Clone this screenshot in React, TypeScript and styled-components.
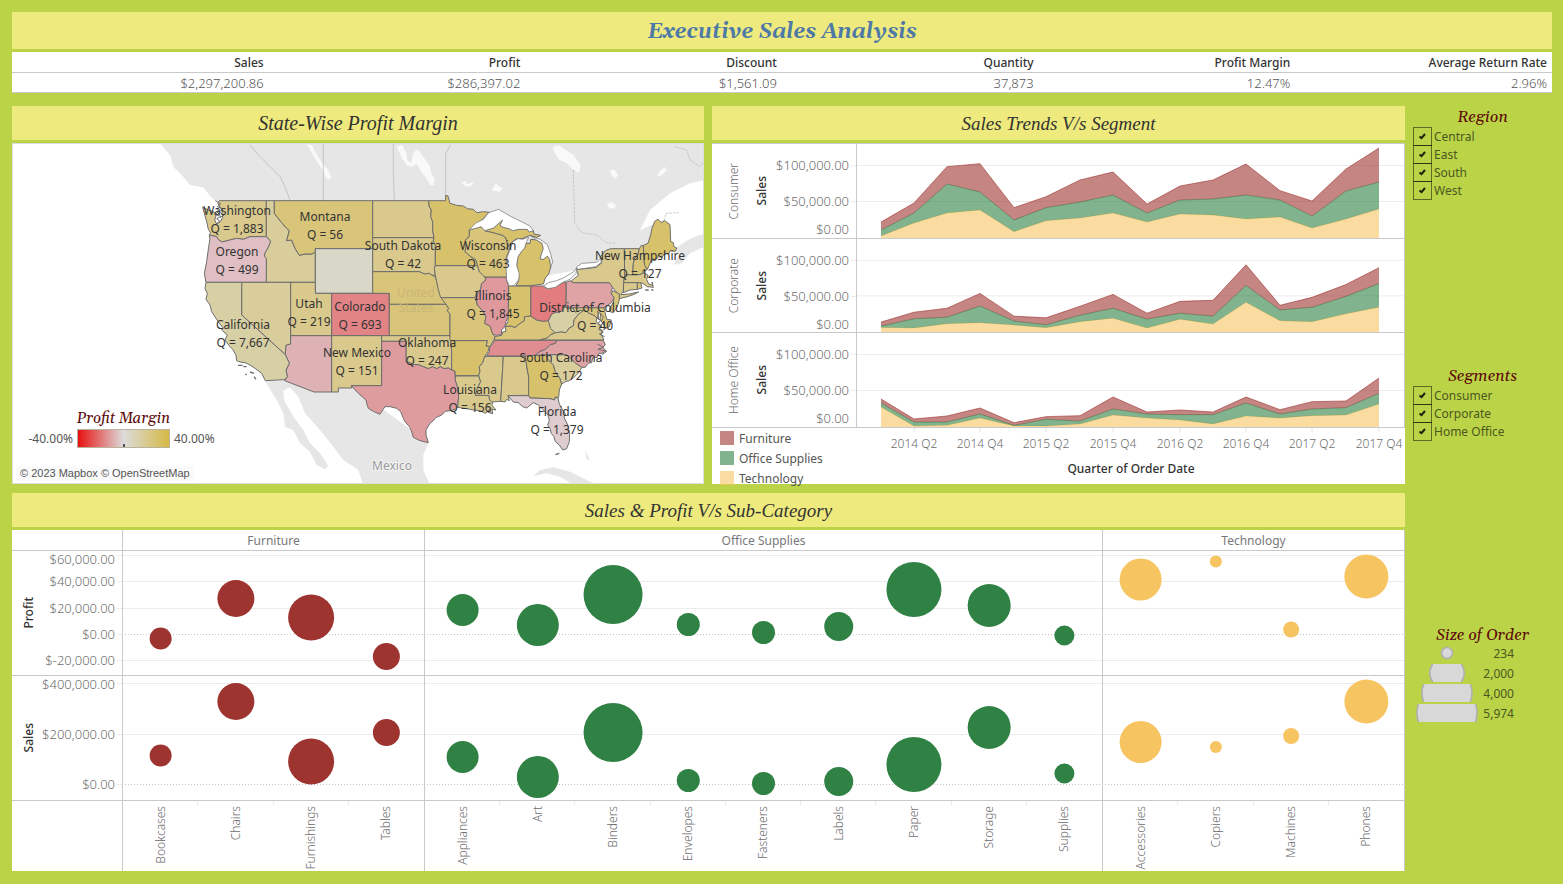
import React from "react";
import styled, { createGlobalStyle } from "styled-components";

const sans = `"Noto Sans", "Open Sans", sans-serif`;
const serif = `Georgia, Gelasio, "DejaVu Serif", serif`;
const lime = "#bbd447";
const butter = "#eeea7d";
const line = "#c9c9c9";
const maroon = "#5c0a0a";

const Global = createGlobalStyle`
  * { box-sizing: border-box; }
  body { margin: 0; background: ${lime}; font-family: ${sans}; font-size: 12px; color: #555; }
  svg { display: block; }
  h1, h2, h3 { margin: 0; font-weight: 400; }
  svg text { font-family: ${sans}; }
`;

/* ---------- page frame ---------- */
const Page = styled.main`
  display: flex;
  flex-direction: column;
  padding: 12px 11px 13px 12px;
`;
const Banner = styled.h1`
  height: 37px;
  margin-bottom: 3px;
  background: ${butter};
  color: #4e79a7;
  font: italic 700 21px/40px ${serif};
  text-align: center;
`;
const Columns = styled.div`
  display: grid;
  grid-template-columns: minmax(0, 1fr) 139px;
  column-gap: 8px;
  align-items: start;
  margin-top: 13px;
`;
const Main = styled.div`
  display: grid;
  grid-template-columns: minmax(0, 692fr) minmax(0, 693fr);
  gap: 9px 8px;
`;
const Panel = styled.section<{ $wide?: boolean }>`
  display: flex;
  flex-direction: column;
  grid-column: ${(p) => (p.$wide ? "1 / -1" : "auto")};
`;
const PanelTitle = styled.h2<{ $size?: number }>`
  height: 34px;
  margin-bottom: 3px;
  background: ${butter};
  color: #333;
  font: italic 400 ${(p) => p.$size ?? 19}px/35px "Liberation Serif", serif;
  text-align: center;
`;

/* ---------- totals ---------- */
const Totals = styled.table`
  width: 100%;
  table-layout: fixed;
  border-collapse: separate;
  border-spacing: 0;
  background: #fff;
`;
const TotalHead = styled.th`
  height: 21px;
  padding: 0 5px 0 0;
  border-bottom: 1px solid ${line};
  color: #333;
  font-size: 12px;
  font-weight: 500;
  text-align: right;
`;
const TotalCell = styled.td`
  height: 20px;
  padding: 0 5px 0 0;
  border-bottom: 1px solid ${line};
  font-size: 13px;
  line-height: 18px;
  font-weight: 300;
  text-align: right;
`;

/* ---------- map ---------- */
const MapBody = styled.div`
  position: relative;
  flex: 1;
  min-height: 341px;
  border: 1px solid #dedede;
  background: #fff;
`;
const MapSvg = styled.svg`
  width: 100%;
  height: 339px;
`;
const RampLegend = styled.div`
  position: absolute;
  left: 12px;
  top: 265px;
  display: grid;
  grid-template-columns: 48px 93px 48px;
  column-gap: 4px;
  align-items: center;
`;
const LegendTitle = styled.h3`
  color: ${maroon};
  font: italic 400 16px/22px ${serif};
  text-align: center;
  white-space: nowrap;
`;
const RampTitle = styled(LegendTitle)`
  grid-column: 2;
  font-size: 15px;
  line-height: 20px;
`;
const RampLabel = styled.span<{ $end?: boolean }>`
  grid-row: 2;
  text-align: ${(p) => (p.$end ? "right" : "left")};
`;
const Ramp = styled.div`
  grid-row: 2;
  display: flex;
  justify-content: center;
  align-items: flex-end;
  height: 19px;
  border: 1px solid #b9b39b;
  background: linear-gradient(90deg, #e81010, #dcdcdc 50%, #d6b945);
`;
const RampMark = styled.i`
  width: 2px;
  height: 3px;
  background: #555;
`;
const Credit = styled.div`
  position: absolute;
  left: 3px;
  bottom: 2px;
  padding: 0 4px;
  background: #fafafa;
  font: 11px/15px "Liberation Sans", sans-serif;
`;

/* ---------- trends ---------- */
const TrendBody = styled.div`
  height: 341px;
  background: #fff;
`;
const TrendRow = styled.div<{ $h: number }>`
  display: grid;
  grid-template-columns: 144px minmax(0, 1fr);
  grid-template-rows: minmax(0, 1fr);
  height: ${(p) => p.$h}px;
  border-bottom: 1px solid ${line};
  border-right: 1px solid ${line};
  &:first-child { border-top: 1px solid ${line}; }
`;
const TrendAxis = styled.div`
  display: grid;
  grid-template-columns: 44px 12px minmax(0, 1fr);
  grid-template-rows: minmax(0, 1fr);
  align-items: center;
  justify-items: center;
`;
const Vertical = styled.span<{ $strong?: boolean }>`
  writing-mode: vertical-rl;
  transform: rotate(180deg);
  white-space: nowrap;
  line-height: 16px;
  font-weight: ${(p) => (p.$strong ? 500 : 300)};
  color: ${(p) => (p.$strong ? "#333" : "#6c6c6c")};
`;
const FillSvg = styled.svg`
  width: 100%;
  height: 100%;
`;
const TickSvg = styled(FillSvg)`
  overflow: visible;
`;
const Plot = styled.div`
  border-left: 1px solid ${line};
  min-width: 0;
`;
const TrendFoot = styled.div`
  display: grid;
  grid-template-columns: 145px minmax(0, 1fr);
`;
const Swatches = styled.ul`
  margin: 0;
  padding: 0 0 0 8px;
  list-style: none;
`;
const SwatchItem = styled.li<{ $c: string }>`
  display: flex;
  align-items: center;
  gap: 5px;
  height: 20px;
  white-space: nowrap;
  &::before {
    content: "";
    width: 14px;
    height: 14px;
    background: ${(p) => p.$c};
    opacity: 0.6;
  }
`;
const QuarterSvg = styled.svg`
  width: 100%;
  height: 31px;
  overflow: visible;
`;
const AxisTitle = styled.div`
  line-height: 20px;
  color: #333;
  font-weight: 500;
  text-align: center;
`;

/* ---------- bubbles ---------- */
const BubbleGrid = styled.div`
  display: grid;
  grid-template-columns: 110px minmax(0, 302fr) minmax(0, 678fr) minmax(0, 303fr);
  grid-template-rows: 21px 125px 125px 70px;
  background: #fff;
`;
const Cell = styled.div<{ $last?: boolean }>`
  min-width: 0;
  border-left: 1px solid ${line};
  border-bottom: ${(p) => (p.$last ? 0 : 1)}px solid ${line};
  &:nth-child(4n) { border-right: 1px solid ${line}; }
`;
const Corner = styled.div<{ $last?: boolean }>`
  border-bottom: ${(p) => (p.$last ? 0 : 1)}px solid ${line};
`;
const HeadCell = styled(Cell)`
  line-height: 21px;
  text-align: center;
  color: #787878;
`;
const AxisCell = styled.div`
  display: grid;
  grid-template-columns: 34px minmax(0, 1fr);
  grid-template-rows: minmax(0, 1fr);
  align-items: center;
  justify-items: center;
  border-bottom: 1px solid ${line};
`;
const Names = styled(Cell)`
  display: flex;
`;
const NameSlot = styled.div`
  flex: 1;
  display: flex;
  justify-content: center;
  align-items: flex-start;
  min-width: 0;
  padding-top: 5px;
  background: linear-gradient(#ececec, #ececec) right top / 1px 4px no-repeat;
  &:last-child { background: none; }
`;

/* ---------- side bar ---------- */
const Side = styled.aside`
  display: flex;
  flex-direction: column;
`;
const SideSection = styled.section`
  height: 259px;
  &:last-child { height: auto; }
`;
const Options = styled.div`
  display: flex;
  flex-direction: column;
`;
const Option = styled.label`
  position: relative;
  display: flex;
  align-items: center;
  gap: 2px;
  height: 18px;
  color: #4c5720;
`;
const Tick = styled.input`
  appearance: none;
  flex: none;
  width: 19px;
  height: 19px;
  margin: 0;
  border: 1px solid rgba(0, 0, 0, 0.5);
`;
const TickMark = styled.svg`
  position: absolute;
  left: 5px;
  top: 5px;
`;
const SideTitle = styled(LegendTitle)<{ $tight?: boolean }>`
  height: ${(p) => (p.$tight ? 19 : 21)}px;
`;
const Sizes = styled.ul`
  margin: 0;
  padding: 0;
  list-style: none;
`;
const SizeItem = styled.li`
  display: grid;
  grid-template-columns: 68px 33px;
  align-items: center;
  height: 20px;
  text-align: right;
  color: #4c5720;
`;

/* ---------- data ---------- */
const RED = "#9e3430";
const GREEN = "#2f8144";
const GOLD = "#f7c462";

const totals = [
  ["Sales", "$2,297,200.86"],
  ["Profit", "$286,397.02"],
  ["Discount", "$1,561.09"],
  ["Quantity", "37,873"],
  ["Profit Margin", "12.47%"],
  ["Average Return Rate", "2.96%"],
];

const quarterX = [24, 57, 90, 123, 157, 189, 223, 256, 290, 323, 356, 389, 423, 455, 489, 522];
const quarterLabels = ["2014 Q2", "2014 Q4", "2015 Q2", "2015 Q4", "2016 Q2", "2016 Q4", "2017 Q2", "2017 Q4"];

// Stacked upper edges of each band; 108 units stand for $50,000.
const trends = [
  {
    name: "Consumer",
    h: 96,
    tech: [6, 45, 75, 84, 19, 52, 60, 75, 48, 72, 69, 57, 63, 30, 57, 87],
    office: [24, 75, 162, 138, 54, 91, 108, 129, 75, 114, 117, 129, 114, 66, 141, 168],
    furn: [48, 105, 214, 223, 91, 124, 174, 198, 102, 156, 174, 222, 142, 111, 207, 270],
  },
  {
    name: "Corporate",
    h: 94,
    tech: [14, 12, 25, 28, 21, 13, 31, 42, 12, 39, 24, 90, 34, 31, 55, 75],
    office: [18, 40, 45, 79, 33, 22, 51, 72, 39, 57, 48, 141, 67, 75, 108, 147],
    furn: [30, 60, 72, 117, 48, 43, 78, 114, 57, 93, 96, 204, 81, 105, 144, 195],
  },
  {
    name: "Home Office",
    h: 95,
    tech: [60, 3, 5, 27, 3, 3, 9, 36, 27, 21, 9, 33, 27, 34, 36, 69],
    office: [72, 15, 15, 39, 5, 23, 18, 54, 39, 37, 37, 72, 39, 54, 58, 101],
    furn: [84, 24, 33, 57, 13, 31, 34, 90, 45, 51, 45, 90, 52, 76, 78, 147],
  },
];

type Bubble = [name: string, profitY: number, salesY: number, r: number];
const groups: { name: string; color: string; items: Bubble[] }[] = [
  {
    name: "Furniture",
    color: RED,
    items: [
      ["Bookcases", 87, 79, 11],
      ["Chairs", 47, 25, 18.5],
      ["Furnishings", 66, 85, 23],
      ["Tables", 105, 56, 13.5],
    ],
  },
  {
    name: "Office Supplies",
    color: GREEN,
    items: [
      ["Appliances", 58.5, 80.5, 16],
      ["Art", 73.5, 100.5, 21],
      ["Binders", 43, 56, 29.5],
      ["Envelopes", 73, 104, 11.5],
      ["Fasteners", 81, 107, 11.5],
      ["Labels", 75, 105, 14.5],
      ["Paper", 38, 88, 27.5],
      ["Storage", 54, 51, 21.5],
      ["Supplies", 84, 97, 10],
    ],
  },
  {
    name: "Technology",
    color: GOLD,
    items: [
      ["Accessories", 28, 65.5, 21],
      ["Copiers", 10, 70.5, 6],
      ["Machines", 78, 59.5, 8],
      ["Phones", 25, 25, 22],
    ],
  },
];

const measures = [
  {
    name: "Profit",
    grid: [4, 30, 57, 109],
    zero: 83,
    ticks: [["$60,000.00", 8], ["$40,000.00", 30], ["$20,000.00", 57], ["$0.00", 83], ["$-20,000.00", 109]] as [string, number][],
  },
  {
    name: "Sales",
    grid: [7, 58],
    zero: 108,
    ticks: [["$400,000.00", 8], ["$200,000.00", 58], ["$0.00", 108]] as [string, number][],
  },
];

const Y1 = "#dac98c";
const Y2 = "#d9c57a";
const Y3 = "#d8c16b";
const Y4 = "#d8d0a5";

// State outlines share one coordinate system, three units to a pixel.
const states: [fill: string, points: string][] = [
  [Y1, "88,62 229,62 229,170 180,170 160,178 140,175 120,180 97,186 86,180 80,170 58,165 62,158 55,148 50,125 38,82 60,92 72,96 78,108 74,120 80,132 92,124 98,112 95,90 88,78 84,70"],
  ["#dfbfc3", "58,165 80,170 86,180 97,186 120,180 140,175 160,178 180,170 229,170 234,174 242,184 236,200 226,218 223,228 230,235 229,307 48,307 43,280 50,245 56,200 60,178"],
  ["#d9cd9b", "229,62 253,62 253,100 275,128 290,145 298,152 290,182 305,180 315,205 328,226 345,222 366,222 376,216 376,307 229,307 229,235 223,228 226,218 236,200 242,184 234,174 229,170"],
  [Y2, "253,62 548,62 548,206 376,206 376,216 366,222 345,222 328,226 315,205 305,180 290,182 298,152 290,145 275,128 253,100"],
  ["#d9d7c8", "376,206 548,206 548,340 376,340"],
  ["#d9cd9b", "155,307 302,307 302,492 288,496 286,524 155,405"],
  [Y1, "302,307 376,307 376,340 425,340 425,467 302,467"],
  ["#e28386", "425,340 598,340 598,467 425,467"],
  ["#deb2b5", "302,467 425,467 425,636 372,636 284,602 292,590 288,570 298,550 286,524 288,496 302,492"],
  [Y1, "425,467 575,467 575,617 484,617 486,624 445,624 445,636 425,636"],
  [Y4, "48,307 155,307 155,405 286,524 298,550 288,570 292,590 284,599 226,602 215,580 195,565 180,555 165,548 150,546 140,542 138,525 128,508 120,500 105,480 112,465 95,450 100,444 88,430 78,415 65,395 60,375 48,358 52,340 45,325"],
  [Y1, "548,62 716,62 718,80 724,90 722,110 728,125 728,150 732,173 548,173"],
  [Y1, "548,173 732,173 730,182 736,195 736,257 733,265 736,287 725,285 718,280 704,282 688,275 548,275"],
  [Y2, "548,275 688,275 704,282 718,280 725,285 736,290 742,310 748,330 752,345 760,360 768,373 598,373 598,340 548,340"],
  [Y2, "598,373 768,373 776,385 772,392 780,402 780,467 598,467"],
  [Y1, "575,467 781,467 785,515 785,570 775,564 762,566 752,560 740,566 728,560 715,566 700,560 685,554 668,554 660,548 648,545 648,484 575,484"],
  ["#df9c9f", "575,484 648,484 648,545 660,548 668,554 685,554 700,560 715,566 728,560 740,566 752,560 762,566 775,564 785,570 795,573 796,600 803,622 806,650 803,682 795,688 780,692 766,694 756,704 745,710 738,712 728,724 720,730 714,740 708,750 708,765 715,788 690,782 670,772 664,752 658,740 645,725 640,715 632,695 620,685 600,680 585,680 578,690 570,703 550,694 535,685 530,670 528,660 505,640 484,617 575,617"],
  [Y3, "716,62 767,62 767,46 774,48 780,70 800,76 820,78 832,86 850,88 860,98 880,95 898,97 870,125 838,150 838,170 826,180 828,200 825,215 840,228 858,240 865,257 736,257 736,195 730,182 732,173 728,150 728,125 722,110 724,90 718,80"],
  [Y1, "736,257 863,257 868,275 885,290 888,300 875,310 872,328 862,335 855,353 752,353 745,330 740,305 736,287 733,265"],
  [Y2, "753,353 855,353 862,375 880,395 888,410 884,430 900,438 908,462 916,470 910,482 900,500 888,498 892,482 780,482 780,402 772,392 776,385 768,373"],
  [Y3, "782,482 892,482 888,498 898,500 894,515 884,530 878,548 868,560 870,574 866,587 796,587 795,573 785,570 785,515"],
  [Y1, "796,588 866,588 872,605 862,625 856,646 897,646 899,660 908,664 906,676 918,690 906,688 908,702 896,692 886,700 870,692 850,690 830,686 803,682 806,650 803,622 796,600"],
  [Y1, "892,529 940,529 936,600 932,664 905,666 899,660 897,646 856,646 862,625 872,605 866,587 870,574 868,560 878,548 884,530"],
  [Y1, "940,529 1006,529 1012,570 1016,590 1016,610 1018,646 954,647 958,662 950,658 945,666 932,664 936,600"],
  [Y3, "1006,528 1070,524 1075,540 1090,555 1096,575 1110,595 1115,612 1108,630 1106,652 1095,652 1094,660 1080,656 1020,654 1016,646 1016,590 1012,570"],
  ["#deccce", "954,647 1016,647 1020,654 1080,656 1094,660 1095,652 1104,654 1108,672 1118,690 1126,702 1122,712 1134,736 1139,760 1138,785 1130,806 1118,810 1108,795 1096,785 1092,770 1084,760 1080,745 1073,735 1078,722 1074,705 1060,690 1045,675 1030,668 1020,676 1010,684 998,680 985,668 970,666"],
  ["#d9cd9b", "1070,524 1130,524 1160,552 1176,562 1164,580 1150,594 1138,602 1128,604 1115,612 1110,595 1096,575 1090,555 1075,540"],
  ["#dfa3a6", "1100,481 1240,481 1246,495 1238,502 1248,512 1236,520 1226,520 1222,532 1208,534 1205,548 1194,550 1186,562 1176,562 1160,552 1130,524 1070,524 1035,526 1050,514 1066,508 1080,494 1096,490"],
  ["#e08d91", "914,481 1100,481 1096,490 1080,494 1066,508 1050,514 1035,526 1006,528 890,528 898,515 900,500 908,492"],
  [Y2, "914,480 914,470 935,466 938,456 948,454 945,440 962,438 975,442 990,430 1003,422 1003,410 1022,408 1040,420 1060,424 1077,420 1082,440 1092,450 1098,457 1082,464 1072,474 1050,480"],
  [Y4, "1075,422 1085,402 1100,396 1108,398 1122,385 1128,366 1128,384 1148,384 1156,396 1168,392 1184,390 1178,402 1166,402 1152,420 1150,438 1138,444 1128,458 1112,456 1098,460 1082,446"],
  [Y1, "1050,480 1072,474 1082,464 1098,458 1112,456 1128,458 1138,444 1150,438 1152,420 1166,402 1184,390 1198,400 1212,406 1222,412 1218,424 1232,436 1228,446 1238,452 1234,464 1242,480"],
  [Y2, "1148,383 1242,383 1250,418 1264,420 1258,440 1246,446 1240,430 1230,420 1232,400 1224,398 1226,418 1212,406 1198,400 1184,390 1168,392 1156,396"],
  ["#dfa3a6", "1128,308 1140,302 1150,308 1258,308 1268,322 1262,338 1272,352 1264,368 1252,376 1242,383 1128,383"],
  ["#e27c7f", "1022,318 1058,318 1072,326 1090,322 1110,312 1128,305 1128,366 1122,385 1108,398 1100,396 1085,402 1075,422 1060,424 1040,420 1022,408"],
  [Y3, "956,318 1022,318 1022,408 1003,410 1003,422 990,430 975,442 962,438 945,440 954,425"],
  ["#df999d", "884,291 948,291 955,318 955,408 948,425 944,440 935,450 934,464 918,466 908,462 900,438 884,430 888,410 880,395 862,375 858,355 864,338 872,328 875,310 888,300"],
  [Y2, "838,150 860,144 874,140 884,152 910,158 938,166 948,174 950,186 956,196 950,206 962,192 956,215 948,235 950,262 950,291 884,291 868,275 863,257 858,240 840,228 825,215 828,200 826,180 838,170"],
  [Y3, "884,152 910,144 924,132 938,120 930,136 940,142 958,146 968,152 985,148 1012,148 1018,156 1030,152 1032,162 1052,166 1040,172 1020,166 996,176 980,176 966,186 958,196 950,186 948,174 938,166 910,158"],
  [Y3, "1022,178 1040,180 1056,190 1060,205 1054,224 1050,236 1060,238 1072,228 1080,240 1082,262 1076,282 1066,294 1060,312 1022,317 978,317 986,302 986,280 980,256 984,230 996,212 1004,204 1008,190 1020,190"],
  [Y1, "1145,302 1165,286 1160,268 1190,266 1218,262 1236,248 1230,232 1246,212 1262,206 1303,206 1304,285 1301,310 1300,334 1292,344 1318,342 1346,336 1330,344 1312,350 1288,356 1282,340 1268,322 1258,308 1150,308"],
  [Y1, "1303,206 1348,206 1344,224 1334,235 1330,250 1328,285 1304,285"],
  [Y2, "1348,206 1354,196 1360,198 1362,240 1364,256 1372,268 1362,276 1350,284 1328,285 1330,250 1334,235 1344,224"],
  [Y1, "1304,285 1350,284 1362,278 1374,286 1370,298 1376,312 1388,316 1386,306 1390,322 1372,320 1362,312 1352,308 1301,308"],
  [Y1, "1301,308 1342,308 1342,328 1320,330 1300,338"],
  [Y2, "1342,308 1352,308 1356,324 1342,328"],
  [Y3, "1360,196 1374,190 1382,165 1386,145 1394,124 1404,118 1414,128 1424,122 1440,134 1442,184 1450,188 1452,200 1460,204 1456,214 1440,212 1436,222 1424,220 1416,232 1404,230 1396,242 1384,240 1378,256 1372,268 1364,256 1362,240"],
  [Y2, "1268,332 1288,342 1288,360 1282,380 1270,398 1258,394 1260,382 1270,368 1272,352 1264,342"],
];

const lakes = [
  "838,150 856,130 880,118 896,98 926,88 960,108 1020,138 1030,152 1018,156 1012,148 985,148 968,152 958,146 940,142 930,136 938,120 924,132 910,144 884,152 874,140 860,144",
  "1016,172 998,178 984,176 968,186 958,215 952,230 948,260 950,300 958,318 972,316 986,300 988,282 980,256 984,230 996,212 1004,204 1008,190",
  "1022,168 1050,178 1072,194 1082,222 1088,246 1082,262 1080,240 1072,228 1060,238 1050,236 1054,224 1060,205 1056,190 1040,180",
  "1060,318 1076,308 1100,302 1120,294 1150,276 1160,264 1158,280 1140,298 1120,306 1096,322 1074,326",
  "1160,260 1176,250 1206,248 1222,246 1232,236 1234,246 1218,260 1190,264 1162,268",
];

const waterMarks = [
  "350,-108 366,-104 380,-76 396,-52 412,-34 424,-10 418,0 408,-6 398,-30 380,-56 366,-80",
  "620,-100 636,-106 648,-84 652,-60 662,-50 672,-84 684,-92 700,-70 718,-44 724,-20 734,-4 732,16 720,14 706,-10 694,-24 680,-48 664,-40 650,-44 636,-66",
  "1088,-100 1108,-104 1124,-92 1150,-76 1172,-44 1166,-22 1144,-36 1128,-52 1108,-60 1094,-80",
  "815,8 824,2 832,12 850,6 846,18 828,20",
  "905,30 918,10 928,20 938,24 930,36 918,34",
  "1260,-30 1274,-30 1284,-14 1276,-4 1266,-12",
  "1400,-10 1410,-28 1424,-40 1430,-30 1416,-14",
  "1250,74 1264,66 1278,76 1272,86 1258,84",
];

const places: [string, string, number, number][] = [
  ["Washington", "1,883", 237, 211],
  ["Montana", "56", 325, 217],
  ["Oregon", "499", 237, 252],
  ["South Dakota", "42", 403, 246],
  ["Wisconsin", "463", 488, 246],
  ["New Hampshire", "127", 640, 256],
  ["Utah", "219", 309, 304],
  ["Colorado", "693", 360, 307],
  ["California", "7,667", 243, 325],
  ["Illinois", "1,845", 493, 296],
  ["District of Columbia", "40", 595, 308],
  ["New Mexico", "151", 357, 353],
  ["Oklahoma", "247", 427, 343],
  ["South Carolina", "172", 561, 358],
  ["Louisiana", "156", 470, 390],
  ["Florida", "1,379", 557, 412],
];

/* ---------- drawings ---------- */
function ProfitMap() {
  return (
    <MapSvg viewBox="0 0 690 339" preserveAspectRatio="xMidYMid slice" role="img" aria-label="Profit margin by state">
      <g transform="translate(177 36) scale(.33333)">
        <g fill="#e6e6e6">
          <path d="M-90,-110 L-60,-75 -50,-40 -20,-10 0,15 30,20 50,40 66,60 90,66 760,66 1000,300 1160,270 1350,260 1440,200 1420,120 1350,150 1380,90 1440,40 1500,10 1545,0 V-120 H-90 Z" />
          <path d="M1440,214 L1470,196 1500,176 1545,160 V200 L1500,220 1476,250 1450,254 1470,220 Z" />
          <path d="M225,603 L284,601 372,636 484,617 715,788 700,825 700,870 720,915 H520 L505,870 460,840 430,800 390,750 345,700 325,650 300,622 280,632 282,660 310,710 340,750 360,790 390,820 415,858 405,868 380,855 360,815 330,790 310,750 285,740 280,700 260,660 Z" />
          <path d="M1030,888 L1050,870 1090,862 1140,875 1200,905 1240,920 H1160 L1110,890 1070,880 Z M1185,810 L1195,830 1200,840 1190,838 Z" />
        </g>
        <g fill="#fff">
          {waterMarks.map((p) => (
            <polygon key={p} points={p} opacity=".75" />
          ))}
          <path d="M1370,130 L1384,96 1410,66 1450,40 1500,14 1545,8 V40 L1500,50 1470,66 1440,84 1424,100 1404,110 Z M1440,134 L1470,112 1500,100 1545,106 V150 L1500,166 1470,190 1452,196 1442,184 Z" opacity=".9" />
          <path d="M20,20 L40,22 62,50 80,66 64,72 40,56 Z" />
        </g>
        <g fill="none" stroke="#b3b3b3" strokeWidth="2">
          <path d="M400,-110 V62 M610,-110 V-20 L613,62 M767,62 V-80 L782,-105 M180,-105 L210,-70 240,-40 270,-10 285,20 300,60" />
          <path d="M1150,-30 L1154,130 1175,158 1220,165 1250,188 1278,190 M1422,122 L1428,100 1466,98" strokeDasharray="8 3" />
          <path d="M1455,-100 L1490,-90 1500,-60 1530,-40 1545,-60" strokeDasharray="8 3" />
        </g>
        <g stroke="#6c6c6c" strokeWidth="3" strokeLinejoin="round">
          {states.map(([fill, pts]) => (
            <polygon key={pts} points={pts} fill={fill} />
          ))}
          {lakes.map((p) => (
            <polygon key={p} points={p} fill="#fff" strokeWidth="2" />
          ))}
          <path d="M76,62 L92,72 82,80 98,86 88,96 102,106 90,112 M84,98 L92,110 80,116 90,124 80,130 M78,84 L86,94 76,104 88,108 M1222,392 L1226,404 1220,414 1232,420 1224,432 1236,440 1226,448 1240,456 1228,462 1244,470 M1232,400 L1240,412 1234,424 1244,436 M1222,492 L1240,502 1224,508 1250,514 1236,524 M890,676 L900,686 892,696 904,700" fill="none" />
          <path d="M144,556 h14 M160,560 h10 M180,576 l12,4 M166,582 l4,3 M192,590 l6,8 M1096,824 l12,-4 M1366,330 h10 M1384,330 h6" fill="none" strokeWidth="4" />
        </g>
      </g>
      <g fontSize="12" textAnchor="middle" fill="#c9b577">
        <text x="403" y="153">United</text>
        <text x="403" y="168">States</text>
        <text x="379" y="326" fill="#999" stroke="#f4f4f4" strokeWidth="2" paintOrder="stroke">Mexico</text>
      </g>
      <g fontSize="12" textAnchor="middle" fill="#333">
        {places.map(([name, q, x, y]) => (
          <React.Fragment key={name}>
            <text x={x - 13} y={y - 140}>{name}</text>
            <text x={x - 13} y={y - 122}>{`Q = ${q}`}</text>
          </React.Fragment>
        ))}
      </g>
    </MapSvg>
  );
}

function Band({ top, base, color }: { top: number[]; base: number[]; color: string }) {
  const upper = quarterX.map((x, i) => `${x},${282 - top[i]}`);
  const lower = quarterX.map((x, i) => `${x},${282 - base[i]}`).reverse();
  return (
    <>
      <polygon points={[...upper, ...lower].join(" ")} fill={color} opacity=".6" />
      <polyline points={upper.join(" ")} fill="none" stroke={color} opacity=".6" vectorEffect="non-scaling-stroke" />
    </>
  );
}

function Ticks({ ticks, marks }: { ticks: [string, number][]; marks: number[] }) {
  return (
    <TickSvg>
      <g fill="#6c6c6c" fontSize="13" fontWeight="300" textAnchor="end">
        <svg x="100%" overflow="visible">
          {ticks.map(([t, y]) => (
            <text key={t} x="-7" y={y + 5}>{t}</text>
          ))}
          {marks.map((y) => (
            <path key={y} d={`M-5,${y + 0.5} H0`} stroke="#ececec" />
          ))}
        </svg>
      </g>
    </TickSvg>
  );
}

function Trends() {
  const zero = quarterX.map(() => 0);
  return (
    <TrendBody>
      {trends.map((t) => (
        <TrendRow key={t.name} $h={t.h}>
          <TrendAxis>
            <Vertical>{t.name}</Vertical>
            <Vertical $strong>Sales</Vertical>
            <Ticks ticks={[["$100,000.00", 21], ["$50,000.00", 57], ["$0.00", 85]]} marks={[21, 57]} />
          </TrendAxis>
          <Plot>
            <FillSvg viewBox="0 0 547 282" preserveAspectRatio="none" role="img" aria-label={`${t.name} sales by quarter`}>
              <path d="M0,64.5 H547 M0,172.5 H547" stroke="#ececec" vectorEffect="non-scaling-stroke" />
              <Band top={t.tech} base={zero} color={GOLD} />
              <Band top={t.office} base={t.tech} color={GREEN} />
              <Band top={t.furn} base={t.office} color={RED} />
            </FillSvg>
          </Plot>
        </TrendRow>
      ))}
      <TrendFoot>
        <Swatches>
          <SwatchItem $c={RED}>Furniture</SwatchItem>
          <SwatchItem $c={GREEN}>Office Supplies</SwatchItem>
          <SwatchItem $c={GOLD}>Technology</SwatchItem>
        </Swatches>
        <div>
          <QuarterSvg fill="#6c6c6c" fontSize="12" fontWeight="300" textAnchor="middle">
            {quarterLabels.map((q, i) => {
              const x = `${(quarterX[i * 2 + 1] / 548) * 100}%`;
              return (
                <React.Fragment key={q}>
                  <line x1={x} x2={x} y1="0" y2="4" stroke="#e4e4e4" />
                  <text x={x} y="20">{q}</text>
                </React.Fragment>
              );
            })}
          </QuarterSvg>
          <AxisTitle>Quarter of Order Date</AxisTitle>
        </div>
      </TrendFoot>
    </TrendBody>
  );
}

function Bubbles() {
  return (
    <BubbleGrid>
      <Corner />
      {groups.map((g) => (
        <HeadCell key={g.name}>{g.name}</HeadCell>
      ))}
      {measures.map((m, mi) => (
        <React.Fragment key={m.name}>
          <AxisCell>
            <Vertical $strong>{m.name}</Vertical>
            <Ticks ticks={m.ticks} marks={[...m.grid, m.zero]} />
          </AxisCell>
          {groups.map((g) => (
            <Cell key={g.name}>
              <FillSvg role="img" aria-label={`${g.name} ${m.name}`}>
                {m.grid.map((y) => (
                  <line key={y} x1="0" x2="100%" y1={y + 0.5} y2={y + 0.5} stroke="#ececec" />
                ))}
                <line x1="2" x2="100%" y1={m.zero + 0.5} y2={m.zero + 0.5} stroke="#c4c4c4" strokeDasharray="1 2" />
                {g.items.map((b, i) => (
                  <circle key={b[0]} cx={`${((i + 0.5) / g.items.length) * 100}%`} cy={b[mi === 0 ? 1 : 2] + 0.5} r={b[3]} fill={g.color} />
                ))}
              </FillSvg>
            </Cell>
          ))}
        </React.Fragment>
      ))}
      <Corner $last />
      {groups.map((g) => (
        <Names key={g.name} $last>
          {g.items.map((b) => (
            <NameSlot key={b[0]}>
              <Vertical>{b[0]}</Vertical>
            </NameSlot>
          ))}
        </Names>
      ))}
    </BubbleGrid>
  );
}

function Filter({ title, options }: { title: string; options: string[] }) {
  return (
    <SideSection>
      <SideTitle>{title}</SideTitle>
      <Options>
        {options.map((o) => (
          <Option key={o}>
            <Tick type="checkbox" defaultChecked />
            <TickMark width="9" height="8" viewBox="0 0 9 8" aria-hidden="true">
              <path d="M1.5,4.5 L3.5,6.2 L7,2" fill="none" stroke="#1d210c" strokeWidth="2" />
            </TickMark>
            {o}
          </Option>
        ))}
      </Options>
    </SideSection>
  );
}

function SizeShape({ r }: { r: number }) {
  const h = Math.min(r, 9);
  const dx = Math.sqrt(r * r - h * h);
  const d = r <= 9
    ? `M${34 - r},10 a${r},${r} 0 1 0 ${2 * r},0 a${r},${r} 0 1 0 ${-2 * r},0`
    : `M${34 - dx},1 A${r},${r} 0 0 0 ${34 - dx},19 M${34 + dx},1 A${r},${r} 0 0 1 ${34 + dx},19`;
  const body = `M${34 - dx},1 A${r},${r} 0 0 0 ${34 - dx},19 H${34 + dx} A${r},${r} 0 0 0 ${34 + dx},1 Z`;
  return (
    <svg width="68" height="20" aria-hidden="true">
      {r > 9 && <path d={body} fill="#d8d8d8" />}
      <path d={d} fill={r <= 9 ? "#d8d8d8" : "none"} stroke="#b0b0b0" strokeWidth="1.6" />
    </svg>
  );
}

export default function App() {
  return (
    <>
      <Global />
      <Page>
        <Banner>Executive Sales Analysis</Banner>
        <Totals>
          <thead>
            <tr>{totals.map(([k]) => <TotalHead key={k} scope="col">{k}</TotalHead>)}</tr>
          </thead>
          <tbody>
            <tr>{totals.map(([k, v]) => <TotalCell key={k}>{v}</TotalCell>)}</tr>
          </tbody>
        </Totals>
        <Columns>
          <Main>
            <Panel>
              <PanelTitle $size={20}>State-Wise Profit Margin</PanelTitle>
              <MapBody>
                <ProfitMap />
                <RampLegend>
                  <RampTitle>Profit Margin</RampTitle>
                  <RampLabel $end>-40.00%</RampLabel>
                  <Ramp><RampMark /></Ramp>
                  <RampLabel>40.00%</RampLabel>
                </RampLegend>
                <Credit>© 2023 Mapbox © OpenStreetMap</Credit>
              </MapBody>
            </Panel>
            <Panel>
              <PanelTitle>Sales Trends V/s Segment</PanelTitle>
              <Trends />
            </Panel>
            <Panel $wide>
              <PanelTitle>Sales &amp; Profit V/s Sub-Category</PanelTitle>
              <Bubbles />
            </Panel>
          </Main>
          <Side>
            <Filter title="Region" options={["Central", "East", "South", "West"]} />
            <Filter title="Segments" options={["Consumer", "Corporate", "Home Office"]} />
            <SideSection>
              <SideTitle $tight>Size of Order</SideTitle>
              <Sizes>
                {([["234", 5.5], ["2,000", 17], ["4,000", 25], ["5,974", 30]] as [string, number][]).map(([n, r]) => (
                  <SizeItem key={n}>
                    <SizeShape r={r} />
                    {n}
                  </SizeItem>
                ))}
              </Sizes>
            </SideSection>
          </Side>
        </Columns>
      </Page>
    </>
  );
}
